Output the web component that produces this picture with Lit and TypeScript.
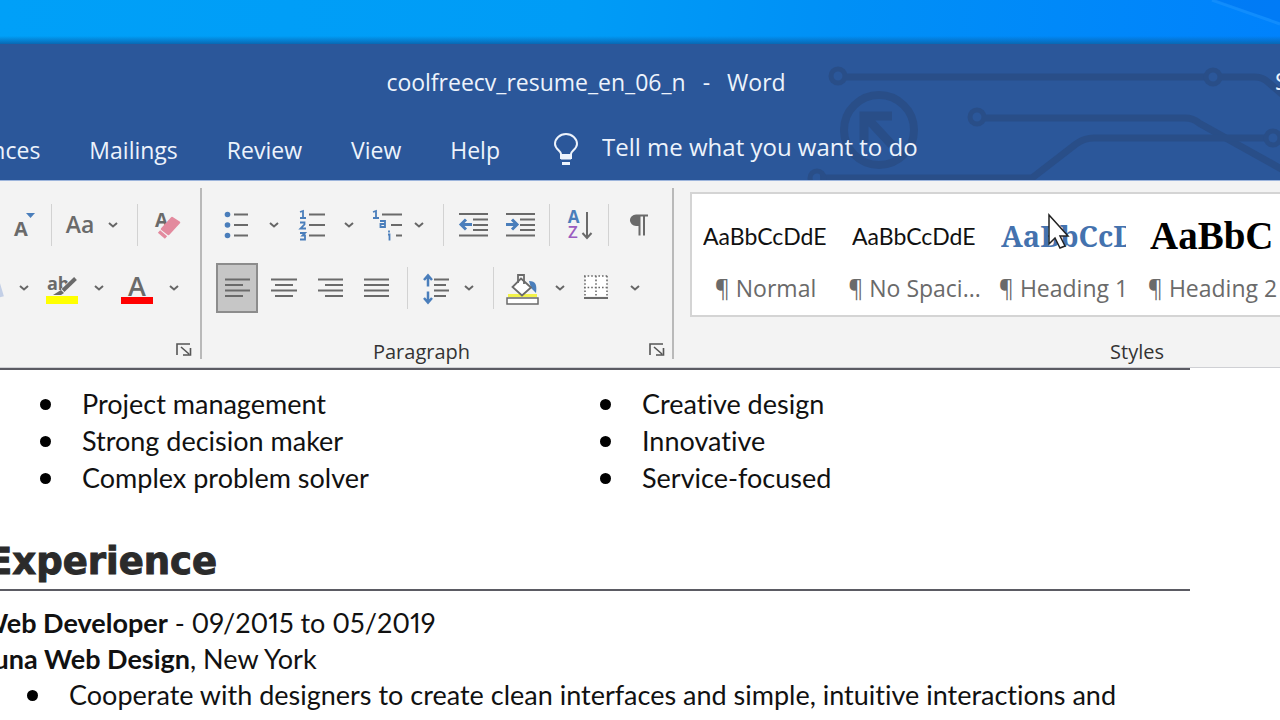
import { LitElement, html, svg, css, nothing } from "lit";
import { customElement, property } from "lit/decorators.js";

const G = "#6a6a6a";
const B = "#4a7ebb";

/* Ribbon glyphs, each drawn in a 42x50 box centred on (21,25) */
const icons: Record<string, unknown> = {
  effects: svg`<path d="M21 38 L29 14 L35 34" fill="none" stroke="#c3cfe6" stroke-width="6"/>`,
  shrink: svg`<text x="13" y="36" font-size="20" font-weight="700" fill=${G}>A</text><path d="M25 13h9l-4.500 5z" fill=${B}/>`,
  case: svg`<text x="20" y="33" text-anchor="middle" font-size="23" font-weight="600" fill=${G}>Aa</text>`,
  clear: svg`<text x="9" y="27" font-size="19" font-weight="700" fill=${G}>A</text>
    <path d="M26 18 L33 22.500 L22.500 34 L16 29 Z" fill="#e38a9e" stroke="#e38a9e" stroke-width="2.500" stroke-linejoin="round"/>
    <path d="M13 31.500 L20 37.500" stroke="#e38a9e" stroke-width="3.500"/>`,
  highlight: svg`<text x="6" y="27" font-size="18" font-weight="700" fill=${G}>ab</text>
    <path d="M34 16 L22 28" stroke="#f3f3f3" stroke-width="6"/>
    <path d="M34.500 15.500 L22 27.500" stroke=${G} stroke-width="4"/><path d="M20 27l3 3-3 2h-8z" fill=${G}/>
    <rect x="5" y="33" width="32" height="8" fill="#ffff00"/>`,
  color: svg`<text x="21" y="33" text-anchor="middle" font-size="27" font-weight="600" fill=${G}>A</text><rect x="5" y="34" width="32" height="7" fill="#ff0000"/>`,
  bullets: svg`<g fill=${B}><circle cx="11.500" cy="14.500" r="2.800"/><circle cx="11.500" cy="25" r="2.800"/><circle cx="11.500" cy="35.500" r="2.800"/></g>
    <path d="M18 14.500h14M18 25h14M18 35.500h14" stroke=${G} stroke-width="1.800"/>`,
  numbering: svg`<path d="M9 12l3-1v6M9 18h6M9 22.500h4.500v2l-4 4h5.500M9 33h5l-2.500 2.500h2.500v4h-5" fill="none" stroke=${B} stroke-width="1.800"/>
    <path d="M18 14.500h16M18 25h16M18 35.500h16" stroke=${G} stroke-width="1.800"/>`,
  multilevel: svg`<path d="M7 12l3-1v6M7 18h6M14 21h5v6h-4.500v-3h4M23 30.500v2M22 34.500h1.500v6" fill="none" stroke=${B} stroke-width="1.800"/>
    <path d="M16 14.500h20M25 25h11M30 35.500h6" stroke=${G} stroke-width="1.800"/>`,
  outdent: svg`<path d="M7 14h29M21 19.500h15M21 25h15M21 30h15M7 35.500h29" stroke=${G} stroke-width="1.800"/>
    <path d="M20 24.500H9M14 19.500l-5 5 5 5" fill="none" stroke=${B} stroke-width="3"/>`,
  indent: svg`<path d="M7 14h29M21 19.500h15M21 25h15M21 30h15M7 35.500h29" stroke=${G} stroke-width="1.800"/>
    <path d="M7 24.500h11M13 19.500l5 5-5 5" fill="none" stroke=${B} stroke-width="3"/>`,
  sort: svg`<text x="15.500" y="23" text-anchor="middle" font-size="17" font-weight="700" fill=${B}>A</text>
    <text x="15" y="38" text-anchor="middle" font-size="17" font-weight="600" fill="#9a5cc0">Z</text>
    <path d="M29 12v26M24.500 33l4.500 5 4.500-5" fill="none" stroke=${G} stroke-width="2"/>`,
  pilcrow: svg`<path d="M19 14.500h12v2h-3v19h-2v-19h-2.500v19h-2v-9.500h-2.500a6 5.700 0 0 1 0-11.500z" fill=${G}/>`,
  left: svg`<path d="M9 16.500h25M9 22h18M9 27.500h25M9 33h18" stroke=${G} stroke-width="1.800"/>`,
  center: svg`<path d="M8 16.500h26M12 22h18M8 27.500h26M12 33h18" stroke=${G} stroke-width="1.800"/>`,
  right: svg`<path d="M8 16.500h25M15 22h18M8 27.500h25M15 33h18" stroke=${G} stroke-width="1.800"/>`,
  justify: svg`<path d="M7 16.500h25M7 22h25M7 27.500h25M7 33h25" stroke=${G} stroke-width="1.800"/>`,
  spacing: svg`<path d="M12 12.500v11M8 17l4-4.500 4 4.500M12 28.500v11M8 35l4 4.500 4-4.500" fill="none" stroke=${B} stroke-width="2.500"/>
    <path d="M18 16.500h15M18 22h12M18 27.500h15M18 33h12" stroke=${G} stroke-width="1.800"/>`,
  shading: svg`<path d="M27 18c7 0 8 4 7 12l-5-5z" fill=${B}/><path d="M6 31h29v3H6z" fill="#f2f24a"/>
    <path d="M19 15.500l10 9-9 8-9.500-8.500z" fill="#fff" stroke=${G} stroke-width="1.800"/>
    <path d="M16 20v-8h6v9" fill="none" stroke=${G} stroke-width="1.800"/>
    <rect x="5" y="35" width="31" height="6" fill="#fff" stroke=${G} stroke-width="1.500"/>`,
  borders: svg`<path d="M8 13h22v20H8z" fill="#fff"/><path d="M7 13h24M7 24.500h24M8 13v20M19 13v20M30 13v20" fill="none" stroke=${G} stroke-width="1.600" stroke-dasharray="1.600 2"/>
    <path d="M7 35h24" stroke=${G} stroke-width="2"/>`,
};

@customElement("ribbon-tool")
export class RibbonTool extends LitElement {
  @property() icon = "";
  @property() label = "";
  @property({ type: Boolean }) active = false;
  @property({ type: Boolean }) menu = false;
  @property({ type: Boolean }) tight = false;

  static styles = css`
    :host { display: flex; flex: none; }
    button { margin: 0; padding: 0; border: 0; background: none; display: grid; place-items: center; font: inherit; }
    .tool { width: 42px; height: 50px; box-sizing: border-box; }
    .active { background: #c6c6c6; outline: 2px solid #8c8c8c; outline-offset: -2px; }
    .menu { width: 22px; margin-left: 5px; }
    .tight { margin-left: 0; }
    svg { display: block; font-family: "Open Sans", sans-serif; }
  `;

  render() {
    return html`<button class="tool ${this.active ? "active" : ""}" aria-label=${this.label}>
        <svg width="42" height="50" viewBox="0 0 42 50">${icons[this.icon]}</svg>
      </button>
      ${this.menu
        ? html`<button class="menu ${this.tight ? "tight" : ""}" aria-label="${this.label} options">
            <svg width="12" height="8" viewBox="0 0 12 8"><path d="M2 2l4 3.500L10 2" fill="none" stroke="#666" stroke-width="2"/></svg>
          </button>`
        : nothing}`;
  }
}

@customElement("app-root")
export class AppRoot extends LitElement {
  static styles = css`
    :host {
      display: flex; flex-direction: column; position: relative; min-height: 100vh; overflow: hidden;
      background: #fff; color: #111; font-family: "Open Sans", sans-serif; white-space: nowrap;
    }
    button { margin: 0; padding: 0; border: 0; background: none; font: inherit; color: inherit; }
    .desktop { display: flex; justify-content: flex-end; height: 44px; background: linear-gradient(180deg, transparent 36px, #0868b4 44px), linear-gradient(95deg, #00a0f8, #009cf6 45%, #0090f6 65%, #0082fc); }
    .header { position: relative; height: 136px; background: #2b579a; color: #edf3fc; overflow: hidden; }
    .circuit { position: absolute; top: 0; right: 0; }
    .title { position: relative; margin: 0; padding: 21px 108px 0 0; font-size: 23px; line-height: 34px; font-weight: 400; text-align: center; }
    .dash { padding: 0 17px; }
    .account { position: absolute; top: 20px; left: 100%; margin-left: -5px; font-size: 23px; line-height: 34px; }
    .bar { position: relative; display: flex; align-items: center; margin-top: 34px; height: 34px; }
    .tabs { display: flex; justify-content: flex-end; gap: 49px; width: 500px; font-size: 23px; line-height: 34px; }
    .bulb { margin-left: 52px; }
    .tell { display: flex; flex: 1; align-items: center; gap: 22px; }
    .tell input { flex: 1; border: 0; padding: 0 0 6px; background: none; font: inherit; font-size: 24px; line-height: 28px; color: inherit; outline: 0; }
    .tell input::placeholder { color: inherit; opacity: 1; }
    .ribbon { display: flex; height: 188px; box-sizing: border-box; padding-top: 7px; border-top: 1px solid #9db5dc; border-bottom: 1px solid #cfd0d4; background: #f3f3f3; }
    .group { flex: none; display: flex; flex-direction: column; box-sizing: border-box; height: 171px; border-right: 2px solid #b9b9b9; }
    .group > * { flex: none; }
    .font { width: 202px; align-items: flex-end; padding-right: 12px; }
    .paragraph { width: 472px; padding-left: 14px; }
    .row { display: flex; height: 50px; margin-top: 12px; }
    .row + .row { margin-top: 13px; }
    .font .row + .row { padding-right: 3px; }
    .cluster { display: flex; gap: 5px; }
    .splits { gap: 6px; }
    .sep { width: 1px; height: 42px; margin: 4px 8px; background: #d2d2d2; }
    .after-menu { margin-left: 13px; }
    .foot { display: flex; align-items: center; box-sizing: border-box; width: 100%; margin-top: 25px; height: 28px; font-size: 20px; line-height: 28px; color: #333; }
    .foot span { flex: 1; text-align: center; }
    .paragraph .foot { padding-right: 7px; }
    .paragraph .foot span { padding-right: 20px; }
    .font .foot { margin-right: -4px; }
    .styles { width: 926px; padding-left: 16px; border: 0; }
    .styles .foot { margin-top: 21px; padding-right: 16px; }
    .gallery { display: flex; margin-top: 4px; height: 125px; box-sizing: border-box; border: 2px solid #d4d4d4; background: #fff; }
    .card { display: flex; flex: none; flex-direction: column; width: 149px; padding: 17px 13px 0 11px; text-align: left; }
    .sample { width: 125px; height: 50px; overflow: hidden; line-height: 50px; color: #111; white-space: nowrap; }
    .normal { font-family: Lato, sans-serif; font-size: 23px; }
    .h1 { font-family: "Noto Serif", "Liberation Serif", serif; font-weight: 700; font-size: 29px; color: #4472ae; }
    .h2 { font-family: "Liberation Serif", serif; font-weight: 700; font-size: 39px; color: #000; }
    .name { align-self: center; margin-top: 10px; font-size: 23px; line-height: 34px; color: #6a6a6a; }
    .page { margin: 0 90px 0 -20px; font-family: Lato, sans-serif; font-size: 27px; line-height: 36px; font-variant-ligatures: none; font-variant-numeric: proportional-nums; border-top: 2px solid #5b5b63; }
    ul { margin: 0; padding: 0; list-style: none; }
    li { display: flex; align-items: center; }
    li::before { content: ""; flex: none; width: 11px; height: 11px; margin-right: 31px; border-radius: 50%; background: #000; }
    .skills { display: grid; grid-template-columns: 560px 1fr; padding: 16px 0 0 60px; row-gap: 1px; }
    h2 { margin: 43px 0 0; padding: 0 0 4px 7px; border-bottom: 2px solid #5b5b63; font-family: "DejaVu Sans", sans-serif; font-weight: 700; font-size: 37px; line-height: 46px; color: #2b2b2b; -webkit-text-stroke: 1px #2b2b2b; }
    .page p { margin: 0; }
    .job { padding-top: 14px; }
    .duties { padding-left: 47px; }
    .pointer { position: absolute; left: 1047px; top: 213px; }
  `;

  private styleCards = [
    ["normal", "AaBbCcDdE", "¶ Normal"],
    ["normal", "AaBbCcDdE", "¶ No Spaci..."],
    ["h1", "AaBbCcD", "¶ Heading 1"],
    ["h2", "AaBbC", "¶ Heading 2"],
  ];

  private launcher() {
    return html`<button aria-label="More settings"><svg width="18" height="16" viewBox="0 0 18 16"><path d="M3 12V1h13M7 4l8 7M16.500 5v7H9" fill="none" stroke="#555" stroke-width="1.600"/></svg></button>`;
  }

  render() {
    return html`
      <div class="desktop">
        <svg width="80" height="40" viewBox="0 0 80 40"><path d="M14 0H80V22Z" fill="#0070ee" opacity=".4"/><path d="M12 0L80 24" stroke="#2a9cff" stroke-width="3" opacity=".4"/></svg>
      </div>
      <header class="header">
        <svg class="circuit" width="480" height="136" viewBox="800 44 480 136" fill="none" stroke="#294e88" stroke-width="7">
          <circle cx="838" cy="76" r="7" stroke-width="5"/><path d="M846 77H1206"/><circle cx="1213" cy="77" r="7" stroke-width="5"/><path d="M1221 77h34q8 0 14 6l14 12"/>
          <circle cx="977" cy="117" r="7" stroke-width="5"/><path d="M985 118h200q8 0 14 5l86 48"/>
          <path d="M820 178h212l44-34q8-6 18-6h172"/><circle cx="1273" cy="138" r="7" stroke-width="5"/><circle cx="817" cy="178" r="7" stroke-width="5"/>
          <circle cx="879" cy="130" r="35" stroke-width="8"/><path d="M864 142v-26h28M866 117l26 28" stroke-width="9"/>
        </svg>
        <h1 class="title">coolfreecv_resume_en_06_n<span class="dash">-</span>Word</h1>
        <span class="account">S</span>
        <div class="bar">
          <nav class="tabs"><button>References</button><button>Mailings</button><button>Review</button><button>View</button><button>Help</button></nav>
          <label class="tell">
            <svg class="bulb" width="28" height="36" viewBox="0 0 28 36" fill="none" stroke="#edf3fc" stroke-width="2"><path d="M9 26v-4C9 19 3 17 3 12a11 10 0 0 1 22 0C25 17 19 19 19 22v4z"/><path d="M9 23.500h10M9 26h10M10 31.500h8" stroke-width="3"/></svg>
            <input placeholder="Tell me what you want to do" aria-label="Tell me what you want to do" />
          </label>
        </div>
      </header>
      <section class="ribbon">
        <div class="group font">
          <div class="row">
            <ribbon-tool icon="shrink" label="Shrink font"></ribbon-tool>
            <i class="sep"></i>
            <ribbon-tool icon="case" label="Change case" menu tight></ribbon-tool>
            <i class="sep after-menu"></i>
            <ribbon-tool icon="clear" label="Clear formatting"></ribbon-tool>
          </div>
          <div class="row cluster splits">
            <ribbon-tool icon="effects" label="Text effects" menu></ribbon-tool>
            <ribbon-tool icon="highlight" label="Highlight" menu></ribbon-tool>
            <ribbon-tool icon="color" label="Font color" menu></ribbon-tool>
          </div>
          <div class="foot"><span></span>${this.launcher()}</div>
        </div>
        <div class="group paragraph">
          <div class="row">
            <div class="cluster splits">
              <ribbon-tool icon="bullets" label="Bullets" menu></ribbon-tool>
              <ribbon-tool icon="numbering" label="Numbering" menu></ribbon-tool>
              <ribbon-tool icon="multilevel" label="Multilevel list" menu tight></ribbon-tool>
            </div>
            <i class="sep after-menu"></i>
            <div class="cluster">
              <ribbon-tool icon="outdent" label="Decrease indent"></ribbon-tool>
              <ribbon-tool icon="indent" label="Increase indent"></ribbon-tool>
            </div>
            <i class="sep"></i>
            <ribbon-tool icon="sort" label="Sort"></ribbon-tool>
            <i class="sep"></i>
            <ribbon-tool icon="pilcrow" label="Show marks"></ribbon-tool>
          </div>
          <div class="row">
            <div class="cluster">
              <ribbon-tool icon="left" label="Align left" active></ribbon-tool>
              <ribbon-tool icon="center" label="Center"></ribbon-tool>
              <ribbon-tool icon="right" label="Align right"></ribbon-tool>
              <ribbon-tool icon="justify" label="Justify"></ribbon-tool>
            </div>
            <i class="sep"></i>
            <ribbon-tool icon="spacing" label="Line spacing" menu tight></ribbon-tool>
            <i class="sep after-menu"></i>
            <div class="cluster splits">
              <ribbon-tool icon="shading" label="Shading" menu></ribbon-tool>
              <ribbon-tool icon="borders" label="Borders" menu></ribbon-tool>
            </div>
          </div>
          <div class="foot"><span>Paragraph</span>${this.launcher()}</div>
        </div>
        <div class="group styles">
          <div class="gallery">
            ${this.styleCards.map(([kind, sample, name]) => html`<button class="card"><span class="sample ${kind}">${sample}</span><span class="name">${name}</span></button>`)}
          </div>
          <div class="foot"><span>Styles</span></div>
        </div>
      </section>
      <main class="page">
        <ul class="skills">
          <li>Project management</li><li>Creative design</li>
          <li>Strong decision maker</li><li>Innovative</li>
          <li>Complex problem solver</li><li>Service-focused</li>
        </ul>
        <h2>Experience</h2>
        <p class="job"><b>Web Developer</b> - 09/2015 to 05/2019</p>
        <p><b>Luna Web Design</b>, New York</p>
        <ul class="duties"><li>Cooperate with designers to create clean interfaces and simple, intuitive interactions and</li></ul>
      </main>
      <svg class="pointer" width="24" height="38" viewBox="0 0 24 38"><path d="M2 2v29l6-6 5 10 5-2-5-10h8z" fill="#fff" stroke="#222" stroke-width="1.500"/></svg>
    `;
  }
}
